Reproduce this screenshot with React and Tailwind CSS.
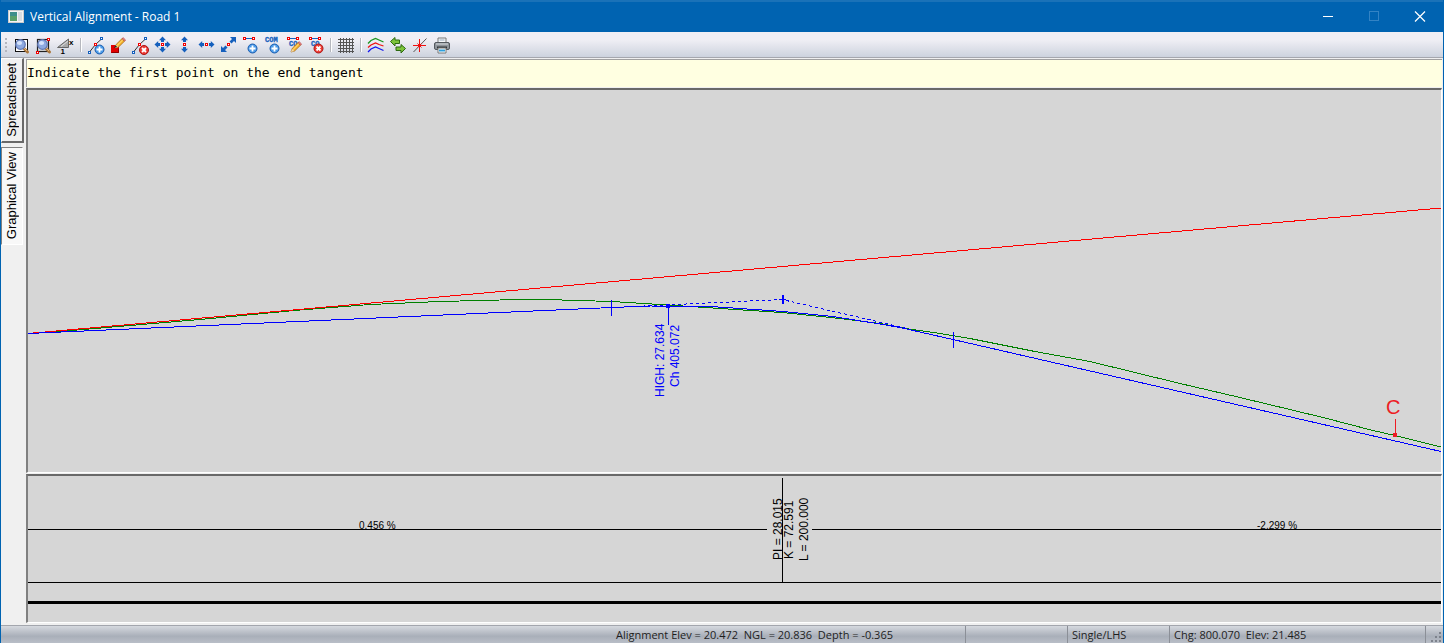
import React from "react";

const BLUE = "#1560bd";

function Node({ x, y, color = "#f00000" }) {
  return <rect x={x + 0.5} y={y + 0.5} width="2" height="2" fill="#fff" stroke={color} shapeRendering="crispEdges" />;
}

function PlusBadge({ x, y }) {
  return (
    <g>
      <circle cx={x} cy={y} r="4.5" fill="#4a9ae8" stroke="#1a5cae" />
      <path d={`M${x - 3} ${y}h6M${x} ${y - 3}v6`} stroke="#fff" strokeWidth="1.8" />
    </g>
  );
}

function DeleteBadge({ x, y }) {
  return (
    <g>
      <circle cx={x} cy={y} r="4.5" fill="#ee3b33" stroke="#a81616" />
      <path d={`M${x - 2} ${y - 2}l4 4M${x + 2} ${y - 2}l-4 4`} stroke="#fff" strokeWidth="1.8" />
    </g>
  );
}

function Lens() {
  return (
    <g>
      <path d="M12.5 13l4 4" stroke="#a9763c" strokeWidth="3" strokeLinecap="round" />
      <path d="M12.5 12.5l3.5 3.5" stroke="#e2b679" strokeWidth="1" />
      <circle cx="9.5" cy="9.5" r="4.8" fill="#8ea9e0" stroke="#6277b4" strokeWidth="1.2" />
      <ellipse cx="8.5" cy="8" rx="2.6" ry="2" fill="#d5e2fb" />
    </g>
  );
}

function Segment() {
  return (
    <g>
      <path d="M3.5 17L9.5 9.5L15.5 4" stroke="#333" fill="none" />
      <Node x={2} y={16} color={BLUE} />
      <Node x={14} y={2} color={BLUE} />
      <Node x={8} y={8} />
    </g>
  );
}

const up = "M10.5 1.5l3.5 3.7h-2v1.800h-3v-1.800h-2z";

function Arrow({ turn }) {
  return <path d={up} fill={BLUE} transform={`rotate(${turn} 10.5 9.5)`} />;
}

function CurveLabel() {
  return (
    <g>
      <path d="M6 3.5h6" stroke={BLUE} />
      <Node x={3} y={2} />
      <Node x={12} y={2} />
      <text x="5" y="11" fontSize="7" fontWeight="700" fontFamily="Liberation Mono, monospace" fill={BLUE} stroke={BLUE} strokeWidth="0.300">CO</text>
    </g>
  );
}

function Pencil({ x, y }) {
  return (
    <g transform={`translate(${x} ${y})`}>
      <path d="M0 10l1.2-3.6L7 0.6l2.6 2.5L3.6 9z" fill="#f7b52c" stroke="#9a5a10" strokeWidth="0.7" />
      <path d="M7 0.6L8.2-.3 10.6 2 9.6 3.1z" fill="#f08a8a" stroke="#a33" strokeWidth="0.6" />
      <path d="M0 10l1-3 2.3 2z" fill="#f3dcb0" />
      <path d="M2.2 7.4L7.8 1.8" stroke="#ffe28a" />
    </g>
  );
}

const icons = {
  zoomWindow: (
    <g>
      <rect x="4.5" y="4.5" width="12" height="12" fill="#fff" stroke="#111" />
      <Lens />
    </g>
  ),
  zoomExtents: (
    <g>
      <rect x="4.5" y="4.5" width="11" height="12" fill="#ddd" stroke="#222" strokeWidth="1.2" />
      <Lens />
      <Node x={3} y={16} />
      <Node x={14} y={3} />
    </g>
  ),
  exaggeration: (
    <g>
      <path d="M2.5 12.5L13.5 4v8.5z" fill="#a9a9a9" stroke="#666" />
      <path d="M6 11.5L13 6" stroke="#ddd" />
      <text x="5.5" y="19" fontSize="8" fontWeight="700" fontFamily="Liberation Sans, sans-serif">1</text>
      <text x="14" y="10" fontSize="8" fontWeight="700" fontFamily="Liberation Sans, sans-serif">x</text>
    </g>
  ),
  addPoint: (
    <g>
      <Segment />
      <PlusBadge x={13.5} y={14.5} />
    </g>
  ),
  editPoint: (
    <g>
      <rect x="3" y="10" width="8" height="8" fill="#e00000" />
      <path d="M3.5 17.5h7v-4" stroke="#8a0000" fill="none" />
      <Pencil x={7} y={3} />
      <path d="M6 13l1.6-2.4 1.6 1.5z" fill="#222" />
    </g>
  ),
  deletePoint: (
    <g>
      <Segment />
      <DeleteBadge x={14} y={15} />
    </g>
  ),
  moveAny: (
    <g>
      <Arrow turn={0} />
      <Arrow turn={90} />
      <Arrow turn={180} />
      <Arrow turn={270} />
      <Node x={9} y={8} />
    </g>
  ),
  moveVertical: (
    <g>
      <Arrow turn={0} />
      <Arrow turn={180} />
      <Node x={9} y={8} />
    </g>
  ),
  moveHorizontal: (
    <g>
      <Arrow turn={90} />
      <Arrow turn={270} />
      <Node x={9} y={8} />
    </g>
  ),
  moveTangent: (
    <g>
      <path d="M18 2v6l-2-2-2.500 2.500-2-2L14 4l-2-2zM3 17v-6l2 2 2.500-2.500 2 2L7 15l2 2z" fill={BLUE} />
      <Node x={9} y={8} />
    </g>
  ),
  addCurve: (
    <g>
      <path d="M6 3.5h6" stroke={BLUE} />
      <Node x={3} y={2} />
      <Node x={12} y={2} />
      <PlusBadge x={12.5} y={13.5} />
    </g>
  ),
  addCombined: (
    <g>
      <text x="3" y="7" fontSize="7" fontWeight="700" fontFamily="Liberation Mono, monospace" fill={BLUE} stroke={BLUE} strokeWidth="0.300">COM</text>
      <PlusBadge x={12.5} y={13.5} />
    </g>
  ),
  editCurve: (
    <g>
      <CurveLabel />
      <Pencil x={7} y={7} />
    </g>
  ),
  deleteCurve: (
    <g>
      <CurveLabel />
      <DeleteBadge x={12.5} y={13.5} />
    </g>
  ),
  grid: (
    <path
      d="M5.500 3v15M8.500 3v15M11.500 3v15M14.500 3v15M17.500 3v15M3 4.500h16M3 7.500h16M3 10.500h16M3 13.500h16M3 16.500h16"
      transform="translate(-1 0)"
      stroke="#555"
      shapeRendering="crispEdges"
    />
  ),
  layers: (
    <g fill="none" strokeWidth="1.3">
      <path d="M2 8.5L5 5.5 9.5 3.5 13 5 17.5 7" stroke="#18951c" />
      <path d="M2 12.5L5 10 9.5 8 13 9.5 17.5 11" stroke="#f01010" />
      <path d="M2 17L5 14 9.5 12 13 13.5 17.5 15.5" stroke="#1414f0" />
    </g>
  ),
  swap: (
    <g fill="#7cc43a" stroke="#2c6910">
      <path d="M2.500 6.500L7 2.500v2.500h4.500v3.500H7v2.500z" />
      <path d="M17.500 13.500L13 9.500v2.500H8v3.500h5v2.500z" />
    </g>
  ),
  intersection: (
    <g>
      <path d="M3.500 17L16.500 3.500" stroke="#555" />
      <path d="M3 10.500h13M9.500 4v13" stroke="#f01010" />
      <path d="M7.500 8.500l4 4M7.500 12.500l4-4" stroke="#f01010" />
    </g>
  ),
  print: (
    <g>
      <path d="M6 3h8v5H6z" fill="#f5f7fa" stroke="#777" />
      <path d="M7.500 5h5" stroke="#9ab" />
      <rect x="2.500" y="7.500" width="15" height="7" rx="1.500" fill="#90959b" stroke="#53585e" />
      <path d="M4 9h12" stroke="#d6dade" />
      <path d="M5 12.500h10" stroke="#33373b" strokeWidth="2" />
      <path d="M6 13h8v5H6z" fill="#fff" stroke="#777" />
      <path d="M7 15.500h6" stroke="#2fa0dc" strokeWidth="2" />
    </g>
  ),
};

const groups = [
  [
    ["zoomWindow", "Zoom window"],
    ["zoomExtents", "Zoom extents"],
    ["exaggeration", "Vertical exaggeration"],
  ],
  [
    ["addPoint", "Add point"],
    ["editPoint", "Edit point"],
    ["deletePoint", "Delete point"],
    ["moveAny", "Move point"],
    ["moveVertical", "Move vertically"],
    ["moveHorizontal", "Move horizontally"],
    ["moveTangent", "Move along tangent"],
    ["addCurve", "Add curve"],
    ["addCombined", "Add combined curve"],
    ["editCurve", "Edit curve"],
    ["deleteCurve", "Delete curve"],
  ],
  [["grid", "Grid"]],
  [
    ["layers", "Layers"],
    ["swap", "Swap direction"],
    ["intersection", "Intersection"],
    ["print", "Print"],
  ],
];

function TitleBar() {
  return (
    <header className="flex h-8 shrink-0 items-center border-t-2 border-[#1a72b8] bg-[#0063b1] pl-[7px] text-white">
      <svg className="size-4 shrink-0" viewBox="0 0 16 16" aria-hidden="true">
        <rect x="0.500" y="1.500" width="15" height="12" fill="#f4f4f4" stroke="#ccc" />
        <rect x="2" y="3" width="7" height="9" fill="#3f8f8a" />
        <rect x="2" y="7" width="7" height="5" fill="#5aa06a" />
        <rect x="10" y="3" width="4" height="9" fill="#d8dce0" />
      </svg>
      <h1 className="ml-1.5 grow font-['Open_Sans',sans-serif] text-[12px] leading-4">Vertical Alignment - Road 1</h1>
      <button aria-label="Minimize" className="flex h-full w-[46px] items-center justify-center">
        <svg className="size-3" viewBox="0 0 12 12"><path d="M1 5.500h10" stroke="#fff" /></svg>
      </button>
      <button aria-label="Maximize" disabled className="flex h-full w-[46px] items-center justify-center">
        <svg className="size-3" viewBox="0 0 12 12"><rect x="1.500" y="0.500" width="9" height="9" fill="none" stroke="#3383c4" /></svg>
      </button>
      <button aria-label="Close" className="flex h-full w-[46px] items-center justify-center">
        <svg className="size-3" viewBox="0 0 12 12"><path d="M1 0.500l10 10M11 0.500L1 10.500" stroke="#fff" strokeWidth="1.200" /></svg>
      </button>
    </header>
  );
}

function Toolbar() {
  return (
    <div role="toolbar" className="flex h-[26px] shrink-0 items-center border-b border-[#a5a7ae] bg-linear-to-b from-[#f0eff5] from-30% to-[#cdd3de] pl-1">
      <svg className="mr-[3px] h-4 w-[2px]" viewBox="0 0 2 16" aria-hidden="true">
        <path d="M0 1h2v2H0zM0 5h2v2H0zM0 9h2v2H0zM0 13h2v2H0z" fill="#b4b6be" />
      </svg>
      {groups.map((group, i) => (
        <div key={i} className={i === 0 ? "flex items-center pr-px" : "flex items-center"}>
          {i > 0 && <div className="mx-[3px] h-3.5 w-[2px] border-l border-[#b5b7be] bg-white" />}
          {group.map(([id, label]) => (
            <button key={id} aria-label={label} title={label} className="flex h-[22px] w-[22px] items-center justify-center">
              <svg className="size-5" viewBox="0 0 20 20">{icons[id]}</svg>
            </button>
          ))}
        </div>
      ))}
    </div>
  );
}

function SideTabs() {
  const label = "rotate-180 text-[13px] leading-4 [writing-mode:vertical-rl]";
  return (
    <div role="tablist" className="flex w-[25px] shrink-0 flex-col items-start gap-1">
      <button role="tab" aria-selected="false" className="flex h-[85px] w-[23px] items-center justify-center border border-b-2 border-r-2 border-[#696969] border-l-white border-t-white bg-[#f0f0f0]">
        <span className={label}>Spreadsheet</span>
      </button>
      <button role="tab" aria-selected="true" className="flex h-[98px] w-[22px] items-center justify-center border border-white border-l-[#808080] border-t-[#808080] bg-[#f8f8f8]">
        <span className={label}>Graphical View</span>
      </button>
    </div>
  );
}

function Profile() {
  return (
    <svg className="block h-full w-full" viewBox="28 90 1413 382" fill="none" role="img" aria-label="Vertical profile">
      <g shapeRendering="crispEdges">
        <path
          stroke="#008000"
          d="M28 333.500L60 331.500L130 325.500L200 319.500L300 310L370 304.500L440 301.500L500 300L545 299.500L612 301.500L668 305L720 308.500L782 312.500L840 318.500L880 323.500L912 329.500L940 333.500L970 338.500L1035 351.500L1090 361.500L1180 383.500L1240 397.500L1323 417.500L1373 430.500L1395 435.500L1441 447"
        />
        <path stroke="#ff0000" d="M28 333.500L1441 208" />
        <path stroke="#0000ff" strokeDasharray="3 3" d="M612 307.500L782 299.500L905 328" />
        <path
          stroke="#0000ff"
          d="M28 333.500L612 307.500L650 306L710 306.500L733 308L783 311.500L833 316.500L880 324L900 327.500L953 339.500L1441 451.500"
        />
        <path stroke="#0000ff" d="M611.500 300v16M953.500 332v16M668.500 305v20M779 299.500h7" />
        <path stroke="#0000ff" strokeWidth="2" d="M783 295v9" />
        <rect x="666" y="304" width="4" height="4" fill="#0000ff" />
        <path stroke="#ed1c24" d="M1395.500 419v14" />
        <rect x="1393" y="433" width="4" height="4" fill="#ed1c24" />
      </g>
      <g fontFamily="Liberation Sans, Arial, sans-serif" fontSize="12" fill="#0000ff">
        <text transform="translate(664 397) rotate(-90)">HIGH: 27.634</text>
        <text transform="translate(679 387) rotate(-90)">Ch 405.072</text>
      </g>
      <text x="1386" y="414" fontFamily="Liberation Sans, Arial, sans-serif" fontSize="20" fill="#ed1c24">C</text>
    </svg>
  );
}

function Grades() {
  return (
    <svg className="block h-full w-full" viewBox="28 476 1413 146" fill="none" role="img" aria-label="Grades and curve data">
      <g shapeRendering="crispEdges" stroke="#000">
        <path d="M28 529.500h739M812 529.500h629M28 582.500h1413M782.500 478v104" />
        <path strokeWidth="3" d="M28 602.500h1413" />
      </g>
      <g fontFamily="Liberation Sans, Arial, sans-serif" fill="#000">
        <text x="359" y="529" fontSize="10">0.456 %</text>
        <text x="1257" y="529" fontSize="10">-2.299 %</text>
        <g fontSize="12">
          <text transform="translate(782 560) rotate(-90)">PI = 28.015</text>
          <text transform="translate(793 559) rotate(-90)">K = 72.591</text>
          <text transform="translate(808 561) rotate(-90)">L = 200.000</text>
        </g>
      </g>
    </svg>
  );
}

function StatusBar() {
  const cell = "flex h-full items-center whitespace-pre border-r border-[#8b8f97] px-1";
  return (
    <footer className="flex h-[18px] shrink-0 items-center border-t border-[#a3a6ad] bg-linear-to-b from-[#d6d9df] via-[#a9afb9] via-60% to-[#b9bec7] font-['Open_Sans',sans-serif] text-[11px] leading-4 text-[#1e1e1e]">
      <div className="flex h-full grow items-center justify-end whitespace-pre border-r border-[#8b8f97] pr-[72px]">
        {"Alignment Elev = 20.472  NGL = 20.836  Depth = -0.365"}
      </div>
      <div className={`${cell} w-[102px]`} />
      <div className={`${cell} w-[102px]`}>Single/LHS</div>
      <div className={`${cell} w-[256px]`}>{"Chg: 800.070  Elev: 21.485"}</div>
      <svg className="ml-auto h-full w-[17px]" viewBox="0 0 17 17" aria-hidden="true">
        <path d="M13 6h2v2h-2zM9 10h2v2H9zM13 10h2v2h-2zM5 14h2v2H5zM9 14h2v2H9zM13 14h2v2h-2z" fill="#7d828c" />
      </svg>
    </footer>
  );
}

export default function App() {
  const panel = "border-2 border-b border-r border-[#696969] border-b-white border-r-white border-l-[#808080] bg-[#d6d6d6]";
  return (
    <div className="flex h-screen min-h-[400px] flex-col overflow-hidden border-x border-[#0063b1] bg-[#f0f0f0] font-['Liberation_Sans',Arial,sans-serif] text-black">
      <TitleBar />
      <Toolbar />
      <div className="flex min-h-0 grow">
        <SideTabs />
        <main className="flex min-w-0 grow flex-col pb-0.5 pr-px">
          <p className="mt-px flex h-7 shrink-0 items-center whitespace-pre border-l border-t border-[#a0a0a0] bg-[#ffffe1] pb-0.5 font-['DejaVu_Sans_Mono',monospace] text-[13px] leading-4">Indicate the first point on the end tangent</p>
          <section className={`${panel} mt-px min-h-0 grow`}>
            <Profile />
          </section>
          <section className={`${panel} mt-px h-[149px] shrink-0`}>
            <Grades />
          </section>
        </main>
      </div>
      <StatusBar />
    </div>
  );
}
